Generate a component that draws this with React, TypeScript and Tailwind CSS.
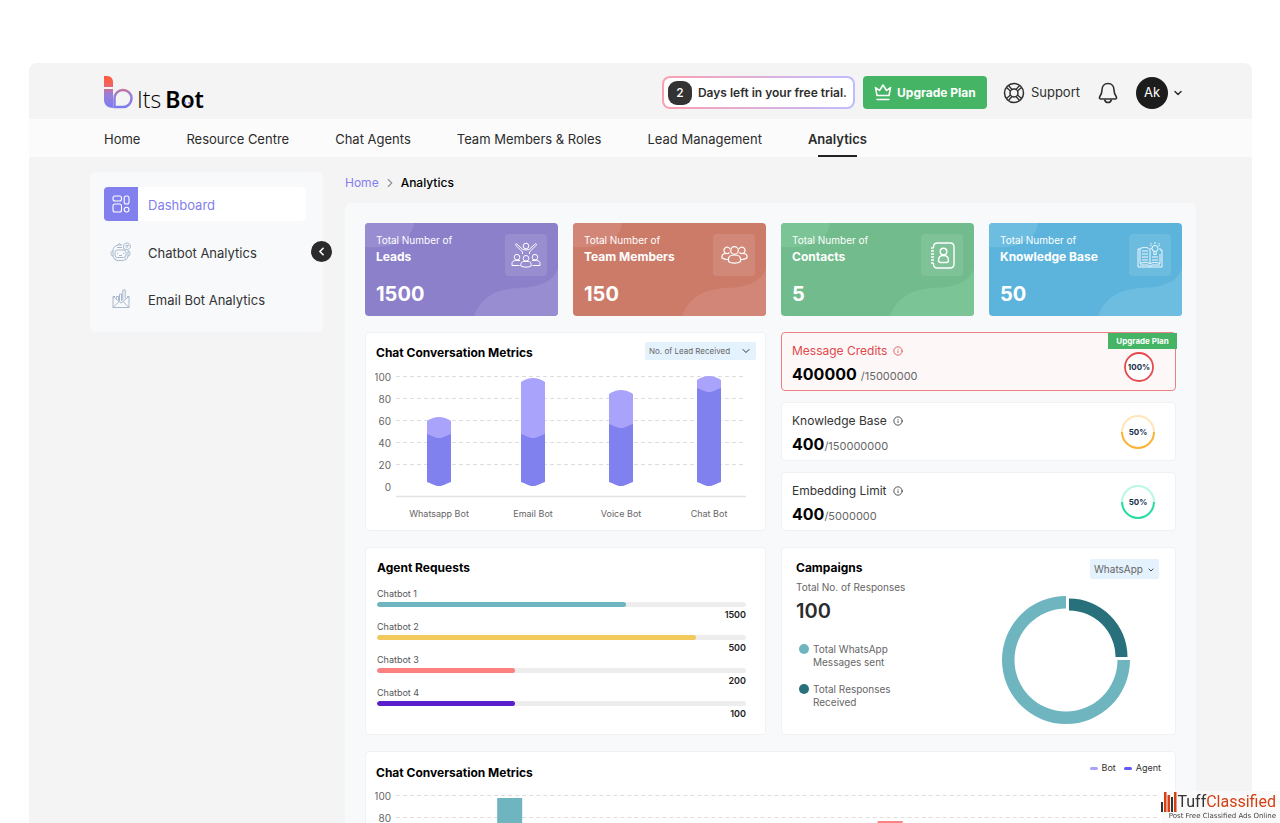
import React from 'react';
import { ChevronDown, ChevronLeft, ChevronRight, Info } from 'lucide-react';

const navItems = ['Home', 'Resource Centre', 'Chat Agents', 'Team Members & Roles', 'Lead Management', 'Analytics'];

const Logo: React.FC = () => (
  <a href="#" className="flex items-end text-black" aria-label="ItsBot">
    <svg width="29" height="33" viewBox="0 0 29 33" fill="none">
      <defs>
        <linearGradient id="logo" x1="0" y1="0" x2="0" y2="33" gradientUnits="userSpaceOnUse">
          <stop offset="0" stopColor="#ff5a3c" />
          <stop offset="0.25" stopColor="#f4645c" />
          <stop offset="0.55" stopColor="#9a7fd8" />
          <stop offset="1" stopColor="#7b7cf2" />
        </linearGradient>
      </defs>
      <path d="M0 0H3C7 0 9 3 9 6V11H0Z" fill="url(#logo)" />
      <path d="M0 13H9V32C4 32 0 29 0 24Z" fill="url(#logo)" />
      <path d="M10.500 31V22.500A8.500 8.500 0 1 1 19 31Z" stroke="url(#logo)" strokeWidth="2.500" />
    </svg>
    <span className="ml-1 flex items-baseline font-['Open_Sans'] text-[23px] leading-5">
      <span className="font-light">Its</span>
      <span className="ml-1 font-['Noto_Sans'] text-[23px] font-semibold">
        B
        <span className="relative">
          o
          <svg className="absolute bottom-[11px] left-1 w-1.5" viewBox="0 0 6 2" fill="#7b7cf2">
            <circle cx="1" cy="1" r="1" />
            <circle cx="5" cy="1" r="1" />
          </svg>
        </span>
        t
      </span>
    </span>
  </a>
);

const CrownIcon = () => (
  <svg width="18" height="17" viewBox="0 0 18 17" fill="none" stroke="white" strokeWidth="1.500" strokeLinejoin="round" strokeLinecap="round">
    <path d="M3 11.500 1.500 3.500 5.500 6.500 9 1 12.500 6.500 16.500 3.500 15 11.500Z" />
    <path d="M3 15.500H15" />
  </svg>
);

const SupportIcon = () => (
  <svg width="22" height="22" viewBox="0 0 22 22" fill="none" stroke="#2f2f2f" strokeWidth="1.500">
    <circle cx="11" cy="11" r="9.500" />
    <circle cx="11" cy="11" r="4" />
    <path d="M3.500 5.500 7.500 9M5.500 3.500 9 7.500M18.500 5.500 14.500 9M16.500 3.500 13 7.500M3.500 16.500 7.500 13M5.500 18.500 9 14.500M18.500 16.500 14.500 13M16.500 18.500 13 14.500" strokeWidth="1.300" />
  </svg>
);

const BellIcon = () => (
  <svg width="20" height="22" viewBox="0 0 20 22" fill="none" stroke="#2f2f2f" strokeWidth="1.600" strokeLinejoin="round">
    <path d="M10 1.500C6 1.500 4 4.500 4 8C4 11 3.200 12.500 1.800 14.500C1 16 1.600 17 3 17H17C18.400 17 19 16 18.200 14.500C16.800 12.500 16 11 16 8C16 4.500 14 1.500 10 1.500Z" />
    <path d="M6.500 17.500C7 19.500 8.200 20.500 10 20.500S13 19.500 13.500 17.500" />
  </svg>
);

const Header: React.FC = () => (
  <header className="flex h-14 items-center justify-between pl-[75px] pr-[68px] pt-[3px]">
    <Logo />
    <div className="flex items-center text-[#2f2f2f]">
      <div className="w-[193px] rounded-lg bg-linear-to-r from-[#fb9fb0] to-[#bdbcff] p-0.5">
        <div className="flex h-[29px] items-center gap-1.5 rounded-md bg-white pl-1">
          <span className="flex size-6 items-center justify-center rounded-[9px] bg-[#333] text-[12px] font-medium text-white">2</span>
          <span className="whitespace-nowrap text-[12px] font-semibold">Days left in your free trial.</span>
        </div>
      </div>
      <button className="ml-2 flex h-[33px] w-[124px] items-center justify-center gap-[5px] rounded bg-[#45b565] text-[12px] font-bold text-white">
        <CrownIcon />
        Upgrade Plan
      </button>
      <a href="#" className="ml-4 flex items-center gap-1.5 text-[13px]">
        <SupportIcon />
        Support
      </a>
      <button className="ml-[18px]" aria-label="Notifications">
        <BellIcon />
      </button>
      <button className="ml-[18px] flex items-center gap-1">
        <span className="flex size-8 items-center justify-center rounded-full bg-[#1c1c1c] text-[13px] text-white">Ak</span>
        <ChevronDown size={12} strokeWidth={3} />
      </button>
    </div>
  </header>
);

const NavBar: React.FC = () => (
  <nav className="flex h-[38px] items-stretch gap-[46px] bg-[#fbfbfb] pl-[75px] text-[13px] leading-5 text-[#2b2b2b]">
    {navItems.map((item) => (
      <a
        key={item}
        href="#"
        className={
          item === 'Analytics'
            ? "relative flex items-center pt-px font-semibold after:absolute after:inset-x-[10px] after:bottom-0 after:h-0.5 after:bg-[#222] after:content-['']"
            : 'flex items-center pt-px'
        }
      >
        {item}
      </a>
    ))}
  </nav>
);

const DashboardIcon = () => (
  <svg width="18" height="18" viewBox="0 0 18 18" fill="none" stroke="white" strokeWidth="1.100">
    <rect x="1" y="1" width="8.500" height="5" rx="2" />
    <rect x="1" y="9" width="8.500" height="8" rx="2" />
    <rect x="12.200" y="1" width="4.800" height="8" rx="2" />
    <circle cx="14.600" cy="14.600" r="2.400" />
  </svg>
);

const RobotIcon = () => (
  <svg width="22" height="20" viewBox="0 0 22 20" fill="none" stroke="#9fb0c6" strokeWidth="0.900">
    <path d="M3 9C3 4.500 6 3 9.500 3H12M18 8.500V13C18 16 16 18.500 12 18.500H8C5 18.500 3 16 3 13V9" />
    <rect x="5" y="8" width="11" height="7.500" rx="2.500" />
    <path d="M3 9C1.500 9 1 10 1 11.500S1.500 14 3 14M18 9C19.500 9 20 10 20 11.500S19.500 14 18 14M7.500 10.800V12M13.500 10.800V12M9 13.500H12M7 5.500H12M8 3L9.500 1.300L11 3M6 16.500 5 18M15 16.500 16 18" />
    <path d="M14 7C12.500 4 14 1 17 1S21.500 4.500 19.500 6.500C18 8 16 7.500 14 7ZM15.500 3.500H19M15.500 5H18" />
  </svg>
);

const MailIcon = () => (
  <svg width="18" height="20" viewBox="0 0 18 20" fill="none" stroke="#9fb0c6" strokeWidth="0.900">
    <path d="M3 7.500H1V18.500H17V7.500H15M1 7.500 9 14 17 7.500M1 18.500 7 12.500M17 18.500 11 12.500" />
    <path d="M4.500 9.500V7.500H6.500V11M7.500 12V5H9.500V12M10.800 11V1H13.200V9.500" />
  </svg>
);

const Sidebar: React.FC = () => (
  <aside className="relative h-40 w-[233px] shrink-0 rounded-md bg-[#f8f9fb] px-3.5 pt-[15px] text-[13px] leading-5 text-[#333]">
    <a href="#" className="mr-[3px] flex h-[34px] items-center overflow-hidden rounded bg-white text-[#8280ee]">
      <span className="flex size-[34px] items-center justify-center bg-[#8280ee]">
        <DashboardIcon />
      </span>
      <span className="ml-2.5 pt-0.5">Dashboard</span>
    </a>
    <a href="#" className="mt-[14px] flex h-[34px] items-center">
      <span className="flex w-[34px] justify-center">
        <RobotIcon />
      </span>
      <span className="ml-2.5 pt-0.5">Chatbot Analytics</span>
    </a>
    <a href="#" className="mt-[13px] flex h-[34px] items-center">
      <span className="flex w-[34px] justify-center">
        <MailIcon />
      </span>
      <span className="ml-2.5 pt-0.5">Email Bot Analytics</span>
    </a>
    <button
      className="absolute -right-[9px] top-[69px] flex size-[21px] items-center justify-center rounded-full bg-[#2b2b2b] text-white"
      aria-label="Collapse sidebar"
    >
      <ChevronLeft size={13} strokeWidth={3} />
    </button>
  </aside>
);

const LeadsIcon = () => (
  <svg width="30" height="26" viewBox="0 0 30 26" fill="none" stroke="white" strokeLinejoin="round">
    <circle cx="15" cy="4" r="2.800" />
    <path d="M11.500 12V10L5 3.500C4 2.200 5 1.200 6.200 2.200L11.500 7.200C13 8.200 17 8.200 18.500 7.200L23.800 2.200C25 1.200 26 2.200 25 3.500L18.500 10V12" />
    <circle cx="6" cy="15.200" r="2.800" />
    <circle cx="24" cy="15.200" r="2.800" />
    <circle cx="15" cy="16.300" r="2.800" />
    <path d="M9.800 24V22.500C9.800 20.500 11 19.500 13 19.500H17C19 19.500 20.200 20.500 20.200 22.500V24C18 25.500 12 25.500 9.800 24ZM8.500 23.500H1V21.500C1 19.500 2.500 18.500 4.500 18.500H9M21.500 23.500H29V21.500C29 19.500 27.500 18.500 25.500 18.500H21" />
  </svg>
);

const TeamIcon = () => (
  <svg width="27" height="18" viewBox="0 0 27 18" fill="none" stroke="white" strokeWidth="1.200">
    <circle cx="13.500" cy="4.500" r="3.800" />
    <path d="M8.500 6.500A3.200 3.200 0 1 1 9 3M18.500 6.500A3.200 3.200 0 1 0 18 3" />
    <path d="M7.500 15.500V13C7.500 10.500 9.500 9 13.500 9S19.500 10.500 19.500 13V15.500C17 17.700 10 17.700 7.500 15.500ZM7 13.500C4 13.500 2.500 13 1 12V10.500C1 8.500 2.500 7.500 5 7.500M20 13.500C23 13.500 24.500 13 26 12V10.500C26 8.500 24.500 7.500 22 7.500" />
  </svg>
);

const ContactsIcon = () => (
  <svg width="25" height="27" viewBox="0 0 25 27" fill="none" stroke="white" strokeWidth="1.400">
    <path d="M3.500 6V5C3.500 2.500 5 1 7.500 1H20C22.500 1 24 2.500 24 5V22C24 24.500 22.500 26 20 26H7.500C5 26 3.500 24.500 3.500 22V21" />
    <path d="M1 6H3.500M1 21H3.500M1 9H4M1 12H4M1 15H4M1 18H4" />
    <circle cx="13.500" cy="9.500" r="3.300" />
    <path d="M8.500 18.500C8.500 15.500 10.500 13.500 13.500 13.500S18.500 15.500 18.500 18.500C18.500 20 17.500 20.500 16 20.500H11C9.500 20.500 8.500 20 8.500 18.500Z" />
  </svg>
);

const BookIcon = () => (
  <svg width="26" height="26" viewBox="0 0 26 26" fill="none" stroke="white" strokeWidth="0.900">
    <path d="M3 7H1V25H25V8H23M13 22C11 20 7 20 3 21.500V6.500C7 5 11 5 13 7.500M13 22C15 20 19 20 23 21.500V12M13 22V7.500L15 6M3 23H11L13 24.500 15 23H23" />
    <path d="M5 9H11M5 12H11M5 15H11M5 18H11M15 15H21M15 18H21" />
    <circle cx="18" cy="6.500" r="3" />
    <path d="M16.800 9.500V12.500H19.200V9.500M18 0V2M13 3 14.500 4M23 3 21.500 4M24 7H22M13.500 1 14.800 2.300M22.500 1 21.300 2.300" />
  </svg>
);

const stats = [
  { label: 'Leads', value: '1500', color: 'bg-[#8d80ca]', tint: '#998dd1', icon: <LeadsIcon /> },
  { label: 'Team Members', value: '150', color: 'bg-[#cd7b69]', tint: '#d28677', icon: <TeamIcon /> },
  { label: 'Contacts', value: '5', color: 'bg-[#72bb8c]', tint: '#7bc496', icon: <ContactsIcon /> },
  { label: 'Knowledge Base', value: '50', color: 'bg-[#5cb4dc]', tint: '#6dbde1', icon: <BookIcon /> },
];

const StatCards: React.FC = () => (
  <div className="grid grid-cols-4 gap-[15px]">
    {stats.map((stat) => (
      <div key={stat.label} className={`relative h-[93px] overflow-hidden rounded text-white ${stat.color}`}>
        <svg className="absolute inset-0 size-full" viewBox="0 0 193 93" preserveAspectRatio="none" fill={stat.tint}>
          <path d="M0 0H49C47 17 29 26 0 24Z" />
          <path d="M109 93C117 73 132 66 153 65C176 64 187 59 193 46V93Z" />
        </svg>
        <div className="relative flex justify-between pl-[11px] pr-[11px] pt-[10px]">
          <div>
            <p className="text-[10px] leading-[14px]">Total Number of</p>
            <p className="text-[12px] font-bold leading-[19px]">{stat.label}</p>
            <p className="mt-[14px] text-[20px] font-bold leading-7">{stat.value}</p>
          </div>
          <div className="mt-px flex size-[42px] items-center justify-center rounded bg-white/10">
            {stat.icon}
          </div>
        </div>
      </div>
    ))}
  </div>
);

const ticks = [100, 80, 60, 40, 20, 0];

// x is the left edge of a bar, top and split are its shoulders
const botBars = [
  { name: 'Whatsapp Bot', x: 52, top: 49, split: 63 },
  { name: 'Email Bot', x: 146, top: 10, split: 63 },
  { name: 'Voice Bot', x: 234, top: 22, split: 53 },
  { name: 'Chat Bot', x: 322, top: 8, split: 17 },
];

const ConversationCard: React.FC = () => (
  <section className="h-[199px] rounded border border-[#f0f1f3] bg-white pl-[9px] pr-[19px]">
    <div className="flex items-start justify-between pt-[9px]">
      <h2 className="mt-[3px] pl-px text-[12px] font-bold leading-4 text-black">Chat Conversation Metrics</h2>
      <div className="relative -mr-[10px] flex">
        <select
          aria-label="Metric"
          className="h-[18px] w-[111px] appearance-none rounded-xs bg-[#e4f2fd] pl-1 text-[8px] leading-[18px] text-[#666]"
        >
          <option>No. of Lead Received</option>
        </select>
        <ChevronDown size={12} className="pointer-events-none absolute right-1 top-[3px] text-[#333]" />
      </div>
    </div>
    <svg className="mt-[9px] w-full" viewBox="0 0 371 150" fontSize="10" fill="#666">
      {ticks.map((tick, i) => (
        <g key={tick}>
          <text x="16" y={11 + i * 22} textAnchor="end">{tick}</text>
          {tick > 0 && <path d={`M21 ${6.5 + i * 22}H371`} stroke="#dedede" strokeDasharray="4 3" />}
        </g>
      ))}
      <path d="M21 126.500H371" stroke="#e3e3e3" strokeWidth="1.500" />
      {botBars.map(({ name, x, top, split }) => (
        <g key={name}>
          <path d={`M${x} ${top + 2}Q${x + 12} ${top - 6} ${x + 24} ${top + 2}V${split + 6}H${x}Z`} fill="#a9a3fb" />
          <path
            d={`M${x} ${split + 1}C${x + 6} ${split + 3} ${x + 8} ${split + 5} ${x + 12} ${split + 5}S${x + 18} ${split + 3} ${x + 24} ${split + 1}V112C${x + 18} 114 ${x + 16} 116 ${x + 12} 116S${x + 6} 114 ${x} 112Z`}
            fill="#8080ee"
          />
          <text x={x + 12} y="147" textAnchor="middle" fontSize="9">{name}</text>
        </g>
      ))}
    </svg>
  </section>
);

const limits = [
  { label: 'Knowledge Base', total: '/150000000', track: '#ffe6b8', color: '#fbb334' },
  { label: 'Embedding Limit', total: '/5000000', track: '#b9f8e2', color: '#25dda3' },
];

const LimitCards: React.FC = () => (
  <div className="flex flex-col gap-[11px]">
    <section className="relative flex h-[59px] items-center justify-between rounded border border-[#ec7f83] bg-[#fdf8f7] pl-2.5 pr-[21px]">
      <div className="pt-1.5">
        <h3 className="flex items-center gap-1.5 text-[12px] leading-4 text-[#e0474c]">
          Message Credits <Info size={10} />
        </h3>
        <p className="mt-[5px] flex items-baseline gap-1 text-[16px] font-bold leading-5 text-black">
          400000 <span className="text-[11px] font-normal text-[#666]">/15000000</span>
        </p>
      </div>
      <svg className="mt-2.5" width="30" height="30" viewBox="0 0 30 30">
        <circle cx="15" cy="15" r="14" fill="white" stroke="#e5494e" strokeWidth="1.800" />
        <text x="15" y="18" fontSize="8" fontWeight="700" textAnchor="middle" fill="#20304c">100%</text>
      </svg>
      <button className="absolute -right-0.5 top-0 h-4 w-[69px] bg-[#45b565] text-[8px] font-bold leading-4 text-white">Upgrade Plan</button>
    </section>
    {limits.map((limit) => (
      <section key={limit.label} className="flex h-[59px] items-center justify-between rounded border border-[#f0f1f3] bg-white pl-2.5 pr-[19px]">
        <div className="pt-1.5">
          <h3 className="flex items-center gap-1.5 text-[12px] leading-4 text-[#333]">
            {limit.label} <Info size={10} />
          </h3>
          <p className="mt-[5px] flex items-baseline text-[16px] font-bold leading-5 text-black">
            400<span className="text-[11px] font-normal text-[#666]">{limit.total}</span>
          </p>
        </div>
        <svg width="36" height="36" viewBox="0 0 36 36" fill="none" strokeWidth="2">
          <path d="M2 18A16 16 0 0 1 34 18" stroke={limit.track} />
          <path d="M2 18A16 16 0 0 0 34 18" stroke={limit.color} />
          <text x="18" y="21" fontSize="8" fontWeight="700" textAnchor="middle" fill="#20304c">50%</text>
        </svg>
      </section>
    ))}
  </div>
);

const agents = [
  { name: 'Chatbot 1', value: 1500, width: 67.5, color: 'bg-[#6eb5c0]' },
  { name: 'Chatbot 2', value: 500, width: 86.5, color: 'bg-[#f2ca5c]' },
  { name: 'Chatbot 3', value: 200, width: 37.5, color: 'bg-[#fb8080]' },
  { name: 'Chatbot 4', value: 100, width: 37.5, color: 'bg-[#5a1fcc]' },
];

const AgentRequests: React.FC = () => (
  <section className="h-[188px] rounded border border-[#f0f1f3] bg-white pl-[11px] pr-[19px] pt-3">
    <h2 className="text-[12px] font-bold leading-4 text-black">Agent Requests</h2>
    <div className="mt-3">
      {agents.map((agent) => (
        <div key={agent.name} className="flex h-[33px] flex-col gap-0.5">
          <span className="text-[9px] leading-3 text-[#555]">{agent.name}</span>
          <div className="h-[5px] shrink-0 overflow-hidden rounded-full bg-[#ededed]">
            <div className={`h-full rounded-full ${agent.color}`} style={{ width: `${agent.width}%` }} />
          </div>
          <span className="text-right text-[9px] font-semibold leading-3 text-[#222]">{agent.value}</span>
        </div>
      ))}
    </div>
  </section>
);

const Campaigns: React.FC = () => (
  <section className="flex h-[188px] justify-between rounded border border-[#f0f1f3] bg-white pl-[14px] pr-4 pt-[11px]">
    <div className="pt-px">
      <h2 className="text-[12px] font-bold leading-4 text-black">Campaigns</h2>
      <p className="mt-[3px] text-[10px] leading-4 text-[#666]">Total No. of Responses</p>
      <p className="mt-0.5 text-[20px] font-semibold leading-7 text-[#2b2b2b]">100</p>
      <ul className="mt-[18px] pl-[3px] text-[10px] leading-[13px] text-[#666]">
        <li className="flex gap-1">
          <span className="mt-px size-2.5 rounded-full bg-[#6eb5c0]" />
          <span className="w-24">Total WhatsApp Messages sent</span>
        </li>
        <li className="mt-3.5 flex gap-1">
          <span className="mt-px size-2.5 rounded-full bg-[#28707c]" />
          <span className="w-24">Total Responses Received</span>
        </li>
      </ul>
    </div>
    <div className="flex flex-col items-end">
      <div className="relative flex">
        <select aria-label="Campaign channel" className="h-5 w-[69px] appearance-none rounded-xs bg-[#e4f2fd] pl-1 text-[10px] text-[#666]">
          <option>WhatsApp</option>
        </select>
        <ChevronDown size={8} strokeWidth={3} className="pointer-events-none absolute right-1 top-[7px] text-[#444]" />
      </div>
      <svg className="mr-[29px] mt-[17px]" width="128" height="128" viewBox="0 0 128 128">
        <path d="M64 0V12.500A51.500 51.500 0 1 0 115.500 64H128A64 64 0 1 1 64 0Z" fill="#6eb5c0" />
        <path d="M67 2.500A58.500 58.500 0 0 1 125.500 61H113.500A46.500 46.500 0 0 0 67 14.500Z" fill="#28707c" />
      </svg>
    </div>
  </section>
);

const WideMetrics: React.FC = () => (
  <section className="rounded border border-[#f0f1f3] bg-white pb-5 pl-[9px] pr-[14px] pt-2">
    <div className="flex items-start justify-between">
      <h2 className="mt-[5px] pl-px text-[12px] font-bold leading-4 text-black">Chat Conversation Metrics</h2>
      <div className="flex items-center text-[9px] leading-4 text-[#333]">
        <span className="mr-1 h-[3px] w-2 rounded-full bg-[#a9a3fb]" />
        Bot
        <span className="ml-2 mr-1 h-[3px] w-2 rounded-full bg-[#6358f5]" />
        Agent
      </div>
    </div>
    <svg className="mt-[9px] w-full" viewBox="0 0 785 130" fontSize="10" fill="#666">
      {[100, 80].map((tick, i) => (
        <g key={tick}>
          <text x="16" y={10 + i * 22} textAnchor="end">{tick}</text>
          <path d={`M21 ${5.5 + i * 22}H781`} stroke="#dedede" strokeDasharray="4 3" />
        </g>
      ))}
      <rect x="122" y="8" width="25" height="108" fill="#6eb5c0" />
      <rect x="502" y="31" width="25" height="85" fill="#fb8080" />
    </svg>
  </section>
);

const TuffBadge: React.FC = () => (
  <div className="fixed bottom-0 right-0 flex h-8 w-[118px] flex-col items-end bg-[#fafafa]/90 pr-1">
    <div className="flex items-end">
      <svg width="16" height="20" viewBox="0 0 16 20">
        <path d="M0 10H2V20H0ZM10 5H12V20H10Z" fill="#333" />
        <path d="M3 0H5.500V20H3ZM6.500 3H9V20H6.500ZM13 0H15.500V20H13Z" fill="#d43f13" />
      </svg>
      <span className="font-['Roboto'] text-[16px] leading-[21px] text-[#333]">
        Tuff<span className="text-[#d43f13]">Classified</span>
      </span>
    </div>
    <span className="whitespace-nowrap font-['DejaVu_Sans'] text-[7px] leading-[9px] text-[#444]">Post Free Classified Ads Online</span>
  </div>
);

const App: React.FC = () => {
  return (
    <div className="h-screen overflow-hidden bg-white pl-[29px] pr-7 pt-[63px] font-['Inter',sans-serif]">
      <div className="min-h-full rounded-t-lg bg-[#f4f4f4]">
        <Header />
        <NavBar />
        <div className="flex items-start pl-[61px] pr-14 pt-[15px]">
          <Sidebar />
          <main className="ml-[22px] min-w-0 flex-1">
            <div className="flex h-[31px] items-start gap-1 pt-[3px] text-[12px] leading-4">
              <a href="#" className="text-[#8280ee]">Home</a>
              <ChevronRight size={14} className="mt-px text-[#8a94a3]" />
              <span className="font-medium text-black">Analytics</span>
            </div>
            <div className="rounded-t-md bg-[#f8f9fb] pb-5 pl-5 pr-[14px] pt-5">
              <StatCards />
              <div className="mt-4 grid grid-cols-[401fr_395fr] gap-x-[15px] gap-y-4 pr-1.5">
                <ConversationCard />
                <LimitCards />
                <AgentRequests />
                <Campaigns />
                <div className="col-span-2">
                  <WideMetrics />
                </div>
              </div>
            </div>
          </main>
        </div>
      </div>
      <TuffBadge />
    </div>
  );
};

export default App;
